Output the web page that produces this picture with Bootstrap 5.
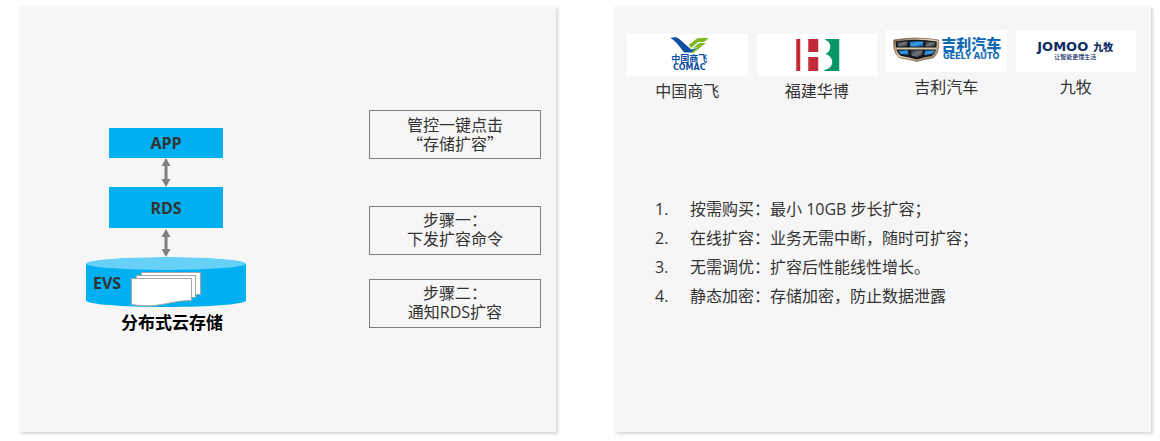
<!DOCTYPE html>
<html lang="zh-CN">
<head>
<meta charset="utf-8">
<meta name="viewport" content="width=device-width, initial-scale=1">
<title>RDS 存储扩容</title>
<link href="https://cdn.jsdelivr.net/npm/bootstrap@5.3.0/dist/css/bootstrap.min.css" rel="stylesheet">
<style>
  body { font-family: "Open Sans", "Noto Sans CJK SC", sans-serif; font-size: 16px; color: #333; background: #fff; }
  .page { padding: 6px 9px 9px 19px; gap: 58px; }
  .panel { flex: 1 1 0; background: #f6f6f6; box-shadow: 2px 2px 3px rgba(0, 0, 0, .16); }
  .flow { padding: 104px 15px 0 67px; }
  .stack { width: 160px; padding-top: 18px; }
  .node { width: 114px; background: #00b0f0; font-weight: 700; }
  .node-app { height: 30px; }
  .node-rds { height: 41px; }
  .evs-label { left: 7px; top: 14px; line-height: 24px; }
  .caption-text { font-family: "Noto Sans CJK SC", sans-serif; font-size: 17px; line-height: 30px; padding-left: 12px; color: #000; }
  .step { width: 172px; border: 1px solid #7f7f7f; padding: 4px 0 5px; line-height: 19px; text-align: center; }
  .step-first { margin-bottom: 47px; font-family: "Noto Sans CJK SC", sans-serif; }
  .step-next { margin-bottom: 24px; }
  .customers { padding: 24px 15px 0 13px; gap: 9px; }
  .customer { flex: 1 1 0; text-align: center; line-height: 30px; }
  .logo { display: block; width: 100%; height: 42px; background: #fff; }
  .benefits { padding: 89px 0 0 41px; line-height: 29px; }
  .num { width: 35px; }
</style>
</head>
<body>
<main class="page d-flex min-vh-100">
  <section class="panel">
    <div class="flow d-flex justify-content-between align-items-start">
      <div class="stack d-flex flex-column align-items-center">
        <div class="node node-app d-flex align-items-center justify-content-center">APP</div>
        <svg width="10" height="29" viewBox="0 0 10 29" aria-hidden="true"><path fill="#7f7f7f" d="M5 0L9.500 8H6.500V21H9.500L5 29L.5 21H3.500V8H.5Z"/></svg>
        <div class="node node-rds d-flex align-items-center justify-content-center">RDS</div>
        <svg width="10" height="29" viewBox="0 0 10 29" aria-hidden="true"><path fill="#7f7f7f" d="M5 1L9.500 9H6.500V21H9.500L5 29L.5 21H3.500V9H.5Z"/></svg>
        <div class="position-relative">
          <svg class="d-block" width="160" height="50" viewBox="0 0 160 50" aria-hidden="true">
            <path fill="#00b0f0" d="M0 6.500H160V43.500C160 47.100 124.200 50 80 50S0 47.100 0 43.500Z"/>
            <ellipse cx="80" cy="6.500" rx="80" ry="6.500" fill="#66d0f7"/>
            <path fill="#f6f6f6" d="M0 0H80C35.800 0 0 2.900 0 6.500ZM160 0H80C124.200 0 160 2.900 160 6.500Z"/>
            <g fill="#fff" stroke="#a6a6a6">
              <path d="M55.500 15.500H114.500V37.500H55.500Z"/>
              <path d="M50.500 18.500H109.500V40.500H50.500Z"/>
              <path d="M45.500 21.500H105.500V43.500C82 43.500 74 52 45.500 47.500Z"/>
            </g>
          </svg>
          <span class="evs-label position-absolute fw-bold">EVS</span>
        </div>
        <div class="caption-text fw-bold text-nowrap">分布式云存储</div>
      </div>
      <div>
        <div class="step step-first">管控一键点击<br>“存储扩容”</div>
        <div class="step step-next">步骤一：<br>下发扩容命令</div>
        <div class="step">步骤二：<br>通知RDS扩容</div>
      </div>
    </div>
  </section>

  <section class="panel">
    <div class="customers d-flex">
      <div class="customer mt-1">
        <svg class="logo" viewBox="0 0 120 42" role="img" aria-label="COMAC">
          <path fill="#0b4ea2" d="M43 4C47 3 50 3 52 5L64 15.500L73 13L66 18.500H57C54 15 49 7 43 4Z"/>
          <path fill="#7fba23" d="M61.500 11L69 5Q70 4 72 4H81.500L77 8H71L63.500 14ZM65 14.500L72 9H78.500L68 17.500Q66.500 19 64 18.500L70 13Z"/>
          <text x="62" y="28" text-anchor="middle" font-family="Noto Sans CJK SC" font-weight="700" font-size="9" fill="#0b4ea2">中国商飞</text>
          <text x="62" y="36" text-anchor="middle" font-family="DejaVu Sans, sans-serif" font-weight="700" font-size="8" fill="#0b4ea2">COMAC</text>
        </svg>
        中国商飞
      </div>
      <div class="customer mt-1">
        <svg class="logo" viewBox="0 0 120 42" role="img" aria-label="福建华博">
          <path fill="#c32a38" d="M39 5H43V37H39ZM51 5H61V18H51ZM51 23H61V37H51Z"/>
          <path fill="#079663" d="M68 5H82V37H67V36C72 35 75 32 75 28C75 24 72 21 68 20C71 19 73 16 73 13C73 9 71 7 68 6Z"/>
        </svg>
        福建华博
      </div>
      <div class="customer">
        <svg class="logo" viewBox="0 0 120 42" role="img" aria-label="GEELY AUTO">
          <defs>
            <linearGradient id="gold" x2="1" y2="1"><stop stop-color="#796044"/><stop offset=".45" stop-color="#ead8b6"/><stop offset="1" stop-color="#86694a"/></linearGradient>
            <linearGradient id="gem" x2="1" y2="1"><stop stop-color="#1a62a8"/><stop offset=".5" stop-color="#35a3ec"/><stop offset="1" stop-color="#124a86"/></linearGradient>
            <linearGradient id="coal" x2="1" y2="1"><stop stop-color="#32343a"/><stop offset=".5" stop-color="#75777e"/><stop offset="1" stop-color="#24262b"/></linearGradient>
          </defs>
          <path fill="url(#gold)" stroke="#5b4834" stroke-width=".6" d="M7.500 10Q30 6 52.500 10C53 19 51 26 46 28Q39 29 30.500 31.500Q22 29 14 28C9 26 7 19 7.500 10Z"/>
          <path fill="#15181e" d="M9.500 11.500Q30 8 50.500 11.500C50.500 19 49 24 45 26Q38 27 30.500 29.500Q23 27 15 26C11 24 9.500 19 9.500 11.500Z"/>
          <path fill="#d8c5a0" d="M10 17.500H50V19.500H10Z"/>
          <path fill="url(#coal)" d="M11 12.500L21 11.500V16.500H12Z"/>
          <path fill="url(#gem)" d="M23.500 11.500H37V16.500H24Z"/>
          <path fill="url(#coal)" d="M39.500 11.500L49 12.500L48.500 16.500H39.500Z"/>
          <path fill="url(#gem)" d="M12 20.500H21.500L22.500 25L15 24Q13 23.500 12 20.500Z"/>
          <path fill="url(#coal)" d="M24.500 20.500H36.500L35.500 25.500L30.500 27L25.500 25.500Z"/>
          <path fill="url(#gem)" d="M39 20.500H48.500Q47.500 23.500 45.500 24L38 25Z"/>
          <text x="85" y="20" text-anchor="middle" font-family="Noto Sans CJK SC" font-weight="900" font-size="15" fill="#1269b4">吉利汽车</text>
          <text x="85" y="29" text-anchor="middle" font-family="Inter, sans-serif" font-weight="800" font-size="9" fill="#1269b4">GEELY AUTO</text>
        </svg>
        吉利汽车
      </div>
      <div class="customer">
        <svg class="logo" viewBox="0 0 120 42" role="img" aria-label="JOMOO 九牧">
          <text x="21" y="21" font-family="DejaVu Sans, sans-serif" font-weight="700" font-size="13" fill="#0d2b63">JOMOO</text>
          <text x="77" y="21" font-family="Noto Sans CJK SC" font-weight="900" font-size="10" fill="#0d2b63">九牧</text>
          <text x="59" y="29" text-anchor="middle" font-family="Noto Sans CJK SC" font-weight="500" font-size="6" fill="#0d2b63">让智能更懂生活</text>
        </svg>
        九牧
      </div>
    </div>
    <ol class="benefits list-unstyled mb-0">
      <li class="d-flex"><span class="num">1.</span><span>按需购买：最小 10GB 步长扩容；</span></li>
      <li class="d-flex"><span class="num">2.</span><span>在线扩容：业务无需中断，随时可扩容；</span></li>
      <li class="d-flex"><span class="num">3.</span><span>无需调优：扩容后性能线性增长。</span></li>
      <li class="d-flex"><span class="num">4.</span><span>静态加密：存储加密，防止数据泄露</span></li>
    </ol>
  </section>
</main>
<script src="https://cdn.jsdelivr.net/npm/bootstrap@5.3.0/dist/js/bootstrap.bundle.min.js"></script>
</body>
</html>
